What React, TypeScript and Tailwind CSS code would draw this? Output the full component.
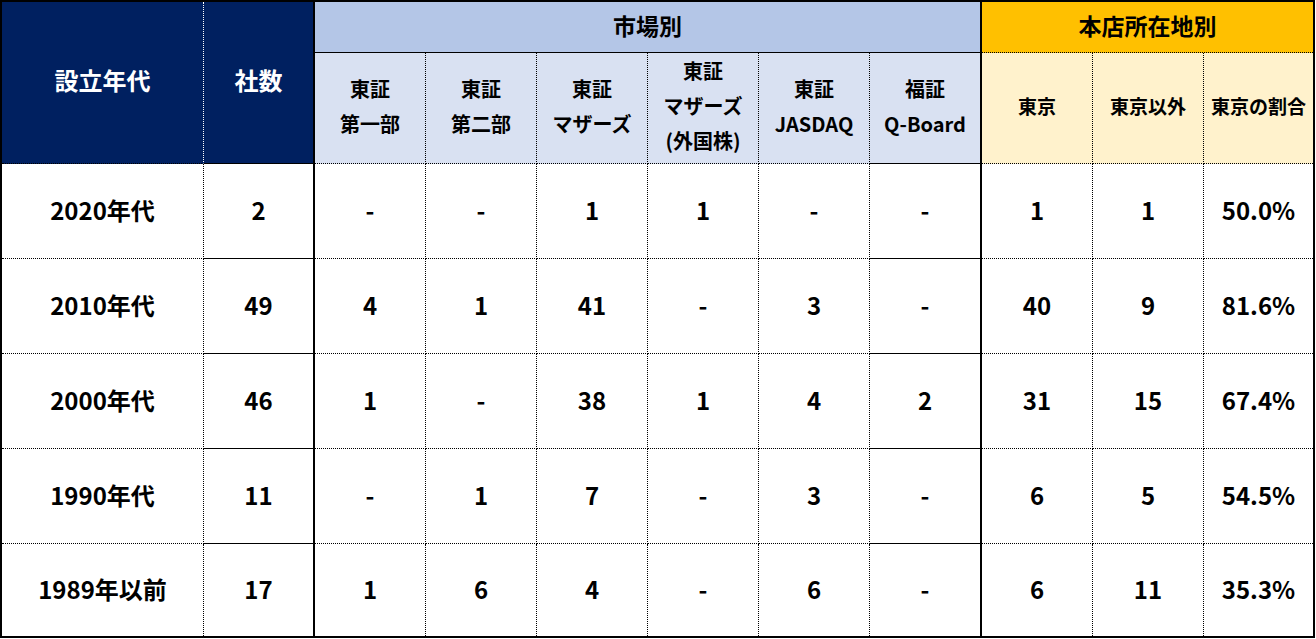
import React from "react";

// ── Data ──────────────────────────────────────────────────────────────────────
type Row = {
  era: string;
  total: string;
  market: string[];
  tokyo: string;
  other: string;
  ratio: string;
};

const ROWS: Row[] = [
  { era: "2020年代", total: "2", market: ["-", "-", "1", "1", "-", "-"], tokyo: "1", other: "1", ratio: "50.0%" },
  { era: "2010年代", total: "49", market: ["4", "1", "41", "-", "3", "-"], tokyo: "40", other: "9", ratio: "81.6%" },
  { era: "2000年代", total: "46", market: ["1", "-", "38", "1", "4", "2"], tokyo: "31", other: "15", ratio: "67.4%" },
  { era: "1990年代", total: "11", market: ["-", "1", "7", "-", "3", "-"], tokyo: "6", other: "5", ratio: "54.5%" },
  { era: "1989年以前", total: "17", market: ["1", "6", "4", "-", "6", "-"], tokyo: "6", other: "11", ratio: "35.3%" },
];

const MARKETS: string[][] = [
  ["東証", "第一部"],
  ["東証", "第二部"],
  ["東証", "マザーズ"],
  ["東証", "マザーズ", "(外国株)"],
  ["東証", "JASDAQ"],
  ["福証", "Q-Board"],
];

const FONT = "font-['Noto_Sans_CJK_JP','Noto_Sans',sans-serif]";

// ── Cell helper ───────────────────────────────────────────────────────────────
const Cell: React.FC<{ className?: string; children?: React.ReactNode }> = ({ className = "", children }) => (
  <div className={`flex items-center justify-center text-center ${className}`}>{children}</div>
);

const App: React.FC = () => {
  const dotR = "border-r border-dotted border-r-black";
  const dotB = "border-b border-dotted border-b-black";
  const thickR = "border-r-2 border-solid border-r-black";

  return (
    <div className={`w-[1316px] h-[639px] bg-white ${FONT}`}>
      <div className="w-[1315px] h-[638px] border-2 border-black grid grid-cols-[202px_111px_111px_111px_111px_111px_111px_112px_111px_111px_109px] grid-rows-[51px_111px_95px_95px_95px_95px_92px] font-bold text-black">
        {/* header */}
        <Cell className={`row-span-2 bg-[#002060] text-white text-[24px] pb-[6px] border-r border-dotted border-r-white ${dotB}`}>設立年代</Cell>
        <Cell className={`row-span-2 bg-[#002060] text-white text-[24px] pb-[6px] ${thickR} ${dotB}`}>社数</Cell>
        <Cell className={`col-span-6 bg-[#b4c6e7] text-[23px] pb-[4px] ${thickR} ${dotB}`}>市場別</Cell>
        <Cell className={`col-span-3 bg-[#ffc000] text-[23px] pb-[4px] ${dotB}`}>本店所在地別</Cell>

        {MARKETS.map((lines, i) => (
          <Cell
            key={i}
            className={`bg-[#d9e1f2] flex-col text-[20px] leading-[35px] pb-[5px] ${i === 5 ? thickR : dotR} ${dotB}`}
          >
            {lines.map((l) => (
              <span key={l}>{l}</span>
            ))}
          </Cell>
        ))}
        <Cell className={`bg-[#fff2cc] text-[19px] pb-[4px] ${dotR} ${dotB}`}>東京</Cell>
        <Cell className={`bg-[#fff2cc] text-[19px] pb-[4px] ${dotR} ${dotB}`}>東京以外</Cell>
        <Cell className={`bg-[#fff2cc] text-[19px] pb-[4px] ${dotB}`}>東京の割合</Cell>

        {/* body */}
        {ROWS.map((r, ri) => {
          const b = ri < ROWS.length - 1 ? dotB : "";
          return (
            <React.Fragment key={r.era}>
              <Cell className={`text-[24px] pb-[3px] ${dotR} ${b}`}>{r.era}</Cell>
              <Cell className={`text-[24px] pb-[3px] ${thickR} ${b}`}>{r.total}</Cell>
              {r.market.map((v, i) => (
                <Cell key={i} className={`text-[24px] pb-[3px] ${i === 5 ? thickR : dotR} ${b}`}>
                  {v}
                </Cell>
              ))}
              <Cell className={`text-[24px] pb-[3px] ${dotR} ${b}`}>{r.tokyo}</Cell>
              <Cell className={`text-[24px] pb-[3px] ${dotR} ${b}`}>{r.other}</Cell>
              <Cell className={`text-[24px] pb-[3px] ${b}`}>{r.ratio}</Cell>
            </React.Fragment>
          );
        })}
      </div>
    </div>
  );
};

export default App;
